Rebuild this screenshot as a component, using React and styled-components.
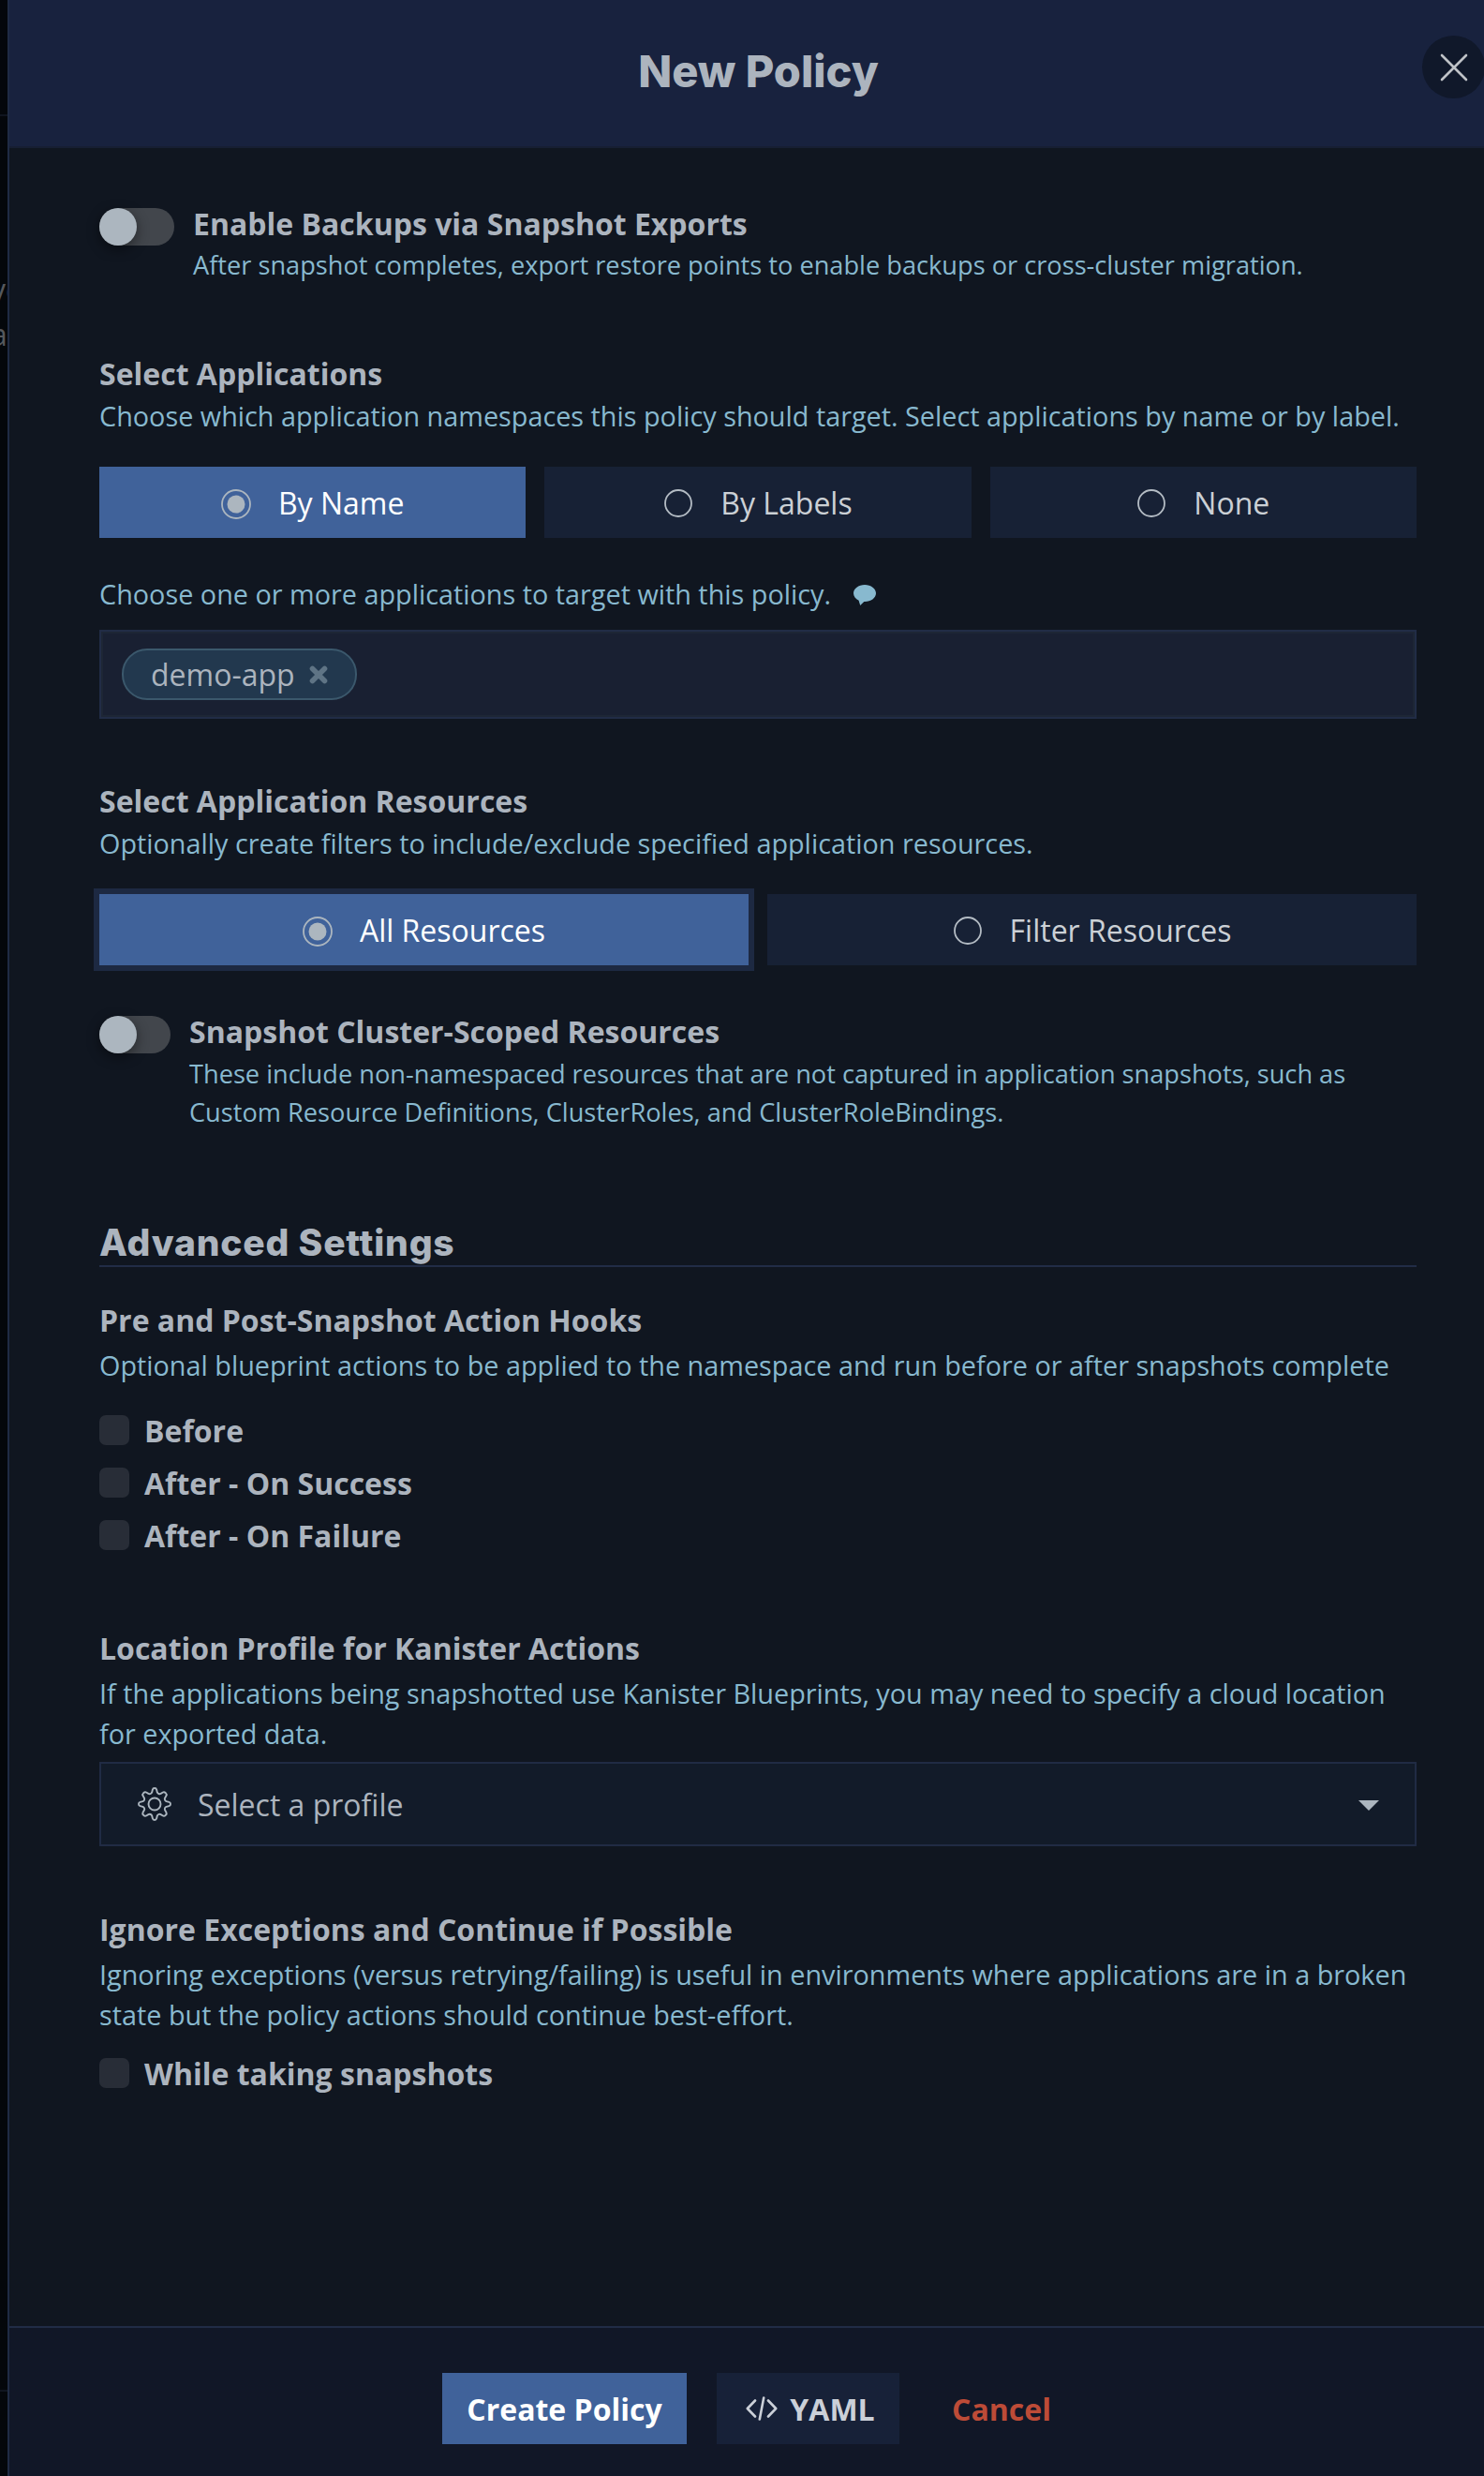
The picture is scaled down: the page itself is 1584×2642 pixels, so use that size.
import React, { useState } from 'react'
import styled, { createGlobalStyle, css } from 'styled-components'

const GlobalStyle = createGlobalStyle`
  * {
    box-sizing: border-box;
  }
  body {
    margin: 0;
    background: #04070b;
    font-family: 'Open Sans', 'Noto Sans', sans-serif;
    color: #acb4be;
  }
  h1, h2, h3, p {
    margin: 0;
  }
  button {
    border: 0;
    padding: 0;
    background: none;
    font: inherit;
    color: inherit;
  }
`

const Page = styled.div`
  display: flex;
  width: 1584px;
  height: 2642px;
  overflow: hidden;
`

const Behind = styled.div`
  display: flex;
  flex-direction: column;
  width: 8px;
  flex: none;
  overflow: hidden;
  background: #04070b;
  color: #55585d;
  font-size: 32px;
  line-height: 48px;
  white-space: nowrap;
`

const BehindLine = styled.div`
  height: 2px;
  flex: none;
  margin-top: ${(p) => p.$top}px;
  background: #10151f;
`

const BehindText = styled.div`
  display: flex;
  flex-direction: column;
  margin-top: 161px;
  height: 97px;
`

const BehindWord = styled.span`
  margin-left: ${(p) => p.$shift}px;
`

const Panel = styled.div`
  display: flex;
  flex-direction: column;
  flex: 1;
  border-left: 2px solid #1f2b44;
  background: #101620;
`

const Header = styled.header`
  position: relative;
  display: flex;
  justify-content: center;
  height: 158px;
  padding-top: 48px;
  background: #18223e;
  border-bottom: 2px solid #171f33;
`

const Title = styled.h1`
  font-family: Inter, sans-serif;
  font-size: 47px;
  font-weight: 800;
  line-height: 56px;
  margin-left: 25px;
`

const Close = styled.button`
  position: absolute;
  top: 38px;
  right: -1px;
  width: 67px;
  height: 67px;
  border-radius: 50%;
  background: #10182a;
  display: flex;
  align-items: center;
  justify-content: center;
  color: #bfc2c7;
`

const Body = styled.main`
  display: flex;
  flex-direction: column;
  flex: 1;
  padding: 59px 72px 0 96px;
`

const Section = styled.section`
  display: flex;
  flex-direction: column;
  margin-top: ${(p) => p.$top || 0}px;
`

const ToggleRow = styled.div`
  display: flex;
  gap: 20px;
  margin-top: ${(p) => p.$top || 0}px;
`

const Track = styled.button`
  flex: none;
  width: ${(p) => p.$width}px;
  height: 40px;
  margin-top: 5px;
  border-radius: 20px;
  background: #42464c;
  display: flex;
`

const Knob = styled.span`
  width: 40px;
  height: 40px;
  border-radius: 50%;
  background: #acb6bf;
  box-shadow: 0 4px 14px rgba(0, 0, 0, 0.45);
`

const Heading = styled.h3`
  font-size: 32px;
  font-weight: 700;
  line-height: 44px;
`

const Help = styled.p`
  display: flex;
  align-items: center;
  margin-top: ${(p) => p.$top ?? 1}px;
  font-size: 28.8px;
  line-height: 43px;
  color: #88b9cf;
  white-space: pre;

  ${(p) =>
    p.$small &&
    css`
      font-size: 27.2px;
      line-height: 41px;
    `}
`

const Choices = styled.div`
  display: flex;
  gap: 20px;
  margin-top: ${(p) => p.$top}px;
`

const Choice = styled.button`
  flex: 1;
  height: 76px;
  padding-top: 2px;
  display: flex;
  align-items: center;
  justify-content: center;
  gap: 29px;
  font-size: 32px;
  line-height: 44px;
  background: ${(p) => (p.$active ? '#40629a' : '#172135')};
  color: ${(p) => (p.$active ? '#ffffff' : '#cbd0d5')};
  box-shadow: ${(p) => (p.$focus ? '0 0 0 6px #1d2942' : 'none')};

  svg {
    margin-top: 2px;
  }
`

const TagBox = styled.div`
  display: flex;
  align-items: center;
  height: 95px;
  margin-top: 17px;
  padding: 0 22px;
  border: 2px solid #212c46;
  box-shadow: inset 0 0 0 2px #1d2635;
  background: #192032;
`

const Tag = styled.div`
  display: flex;
  align-items: center;
  gap: 15px;
  height: 55px;
  padding: 0 29px;
  border: 2px solid #3b586c;
  border-radius: 27px;
  background: #22384e;
  font-size: 32px;
  line-height: 44px;
`

const Divider = styled.h2`
  margin-top: 96px;
  padding-bottom: 1px;
  border-bottom: 2px solid #222c46;
  font-family: Inter, sans-serif;
  font-size: 39px;
  font-weight: 800;
  line-height: 46px;
  letter-spacing: 0.8px;
`

const CheckList = styled.div`
  display: flex;
  flex-direction: column;
  gap: 22px;
  margin-top: ${(p) => p.$top}px;
`

const CheckLabel = styled.label`
  display: flex;
  gap: 16px;
  font-size: 32px;
  font-weight: 700;
  line-height: 34px;
`

const Box = styled.span`
  width: 32px;
  height: 32px;
  border-radius: 7px;
  background: #282d37;
`

const Select = styled.div`
  display: flex;
  align-items: center;
  height: 90px;
  margin-top: 9px;
  padding: 0 38px 0 39px;
  border: 2px solid #202b44;
  background: #121b29;
  font-size: 32px;
  line-height: 44px;
`

const SelectText = styled.span`
  flex: 1;
  margin-left: 28px;
  padding-top: 2px;
`

const Footer = styled.footer`
  display: flex;
  align-items: flex-start;
  height: 160px;
  padding: 48px 0 0 462px;
  border-top: 2px solid #212c46;
  background: #111727;
`

const Action = styled.button`
  display: flex;
  align-items: center;
  justify-content: center;
  gap: 13px;
  height: 76px;
  width: ${(p) => p.$width}px;
  padding-left: ${(p) => p.$indent || 0}px;
  margin-right: 32px;
  font-size: 32px;
  font-weight: 700;
  background: ${(p) => p.$bg || 'transparent'};
  color: ${(p) => p.$color};
`

const RadioIcon = ({ active }) => (
  <svg width="32" height="32" viewBox="0 0 32 32" fill="none">
    {active ? (
      <>
        <circle cx="16" cy="16" r="15" stroke="#acb6bf" strokeWidth="1.8" />
        <circle cx="16" cy="16" r="9.5" fill="#acb6bf" />
      </>
    ) : (
      <circle cx="16" cy="15" r="14" stroke="#b4bcc4" strokeWidth="1.8" />
    )}
  </svg>
)

const CloseIcon = () => (
  <svg width="30" height="30" viewBox="0 0 30 30">
    <path
      d="M2 2 28 28M28 2 2 28"
      stroke="currentColor"
      strokeWidth="2.6"
      strokeLinecap="round"
    />
  </svg>
)

const RemoveIcon = () => (
  <svg width="20" height="20" viewBox="0 0 20 20">
    <path
      d="M3.5 3.5 16.5 16.5M16.5 3.5 3.5 16.5"
      stroke="#5f7485"
      strokeWidth="5.6"
      strokeLinecap="round"
    />
  </svg>
)

const BubbleIcon = styled.svg`
  margin: 2px 0 0 24px;
`

// eight rounded teeth around the rim
const GearIcon = () => (
  <svg width="36" height="36" viewBox="0 0 36 36" fill="none">
    <path
      d="M15.9 2.6Q16.2 1 18 1T20.1 2.6L20.8 5.4Q21.2 6.6 22.4 7T24.6 6.9L26.9 5.5Q28.3 4.7 29.8 6.2T30.5 9.1L29.1 11.4Q28.5 12.6 29 13.7T30.6 15.2L33.4 15.9Q35 16.2 35 18T33.4 20.1L30.6 20.8Q29.4 21.2 29 22.3T29.1 24.6L30.5 26.9Q31.3 28.3 29.8 29.8T26.9 30.5L24.6 29.1Q23.4 28.5 22.3 29T20.8 30.6L20.1 33.4Q19.8 35 18 35T15.9 33.4L15.2 30.6Q14.8 29.4 13.7 29T11.4 29.1L9.1 30.5Q7.7 31.3 6.2 29.8T5.5 26.9L6.9 24.6Q7.5 23.4 7 22.3T5.4 20.8L2.6 20.1Q1 19.8 1 18T2.6 15.9L5.4 15.2Q6.6 14.8 7 13.7T6.9 11.4L5.5 9.1Q4.7 7.7 6.2 6.2T9.1 5.5L11.4 6.9Q12.6 7.5 13.7 7T15.2 5.4Z"
      stroke="#acb6bf"
      strokeWidth="1.9"
      strokeLinejoin="round"
    />
    <circle cx="18" cy="18" r="6.5" stroke="#acb6bf" strokeWidth="1.9" />
  </svg>
)

const CaretIcon = () => (
  <svg width="22" height="14" viewBox="0 0 22 14">
    <path d="M0 3H22L11 14Z" fill="#acb6bf" />
  </svg>
)

const CodeIcon = () => (
  <svg width="34" height="26" viewBox="0 0 34 26" fill="none">
    <path
      d="M10 4.5 1.8 13 10 21.5M24 4.5 32.2 13 24 21.5M19.2 1.5 14.8 24.5"
      stroke="currentColor"
      strokeWidth="2.6"
      strokeLinecap="round"
      strokeLinejoin="round"
    />
  </svg>
)

const RadioGroup = ({ options, value, onChange, top, focused }) => (
  <Choices $top={top}>
    {options.map((option) => (
      <Choice
        key={option}
        $active={option === value}
        $focus={option === focused}
        onClick={() => onChange(option)}
      >
        <RadioIcon active={option === value} />
        {option}
      </Choice>
    ))}
  </Choices>
)

const Checkbox = ({ label }) => (
  <CheckLabel>
    <Box />
    {label}
  </CheckLabel>
)

const App = () => {
  const [target, setTarget] = useState('By Name')
  const [resources, setResources] = useState('All Resources')

  return (
    <>
      <GlobalStyle />
      <Page>
        <Behind>
          <BehindLine $top={122} />
          <BehindText>
            <BehindWord $shift={-10}>ve</BehindWord>
            <BehindWord $shift={-10}>a</BehindWord>
          </BehindText>
          <BehindLine $top={2168} />
        </Behind>
        <Panel>
          <Header>
            <Title>New Policy</Title>
            <Close aria-label="Close">
              <CloseIcon />
            </Close>
          </Header>

          <Body>
            <ToggleRow>
              <Track $width={80}>
                <Knob />
              </Track>
              <div>
                <Heading>Enable Backups via Snapshot Exports</Heading>
                <Help $small>
                  After snapshot completes, export restore points to enable backups or cross-cluster migration.
                </Help>
              </div>
            </ToggleRow>

            <Section $top={74}>
              <Heading>Select Applications</Heading>
              <Help>
                Choose which application namespaces this policy should target. Select applications by name or by label.
              </Help>
              <RadioGroup
                top={33}
                options={['By Name', 'By Labels', 'None']}
                value={target}
                onChange={setTarget}
              />
              <Help $top={38}>
                Choose one or more applications to target with this policy.
                <BubbleIcon width="24" height="22" viewBox="0 0 24 22">
                  <path
                    d="M12 0C5.4 0 0 4 0 9C0 12.3 2.2 15 5.6 16.7L7.2 22L11.3 18H12C18.6 18 24 14 24 9S18.6 0 12 0Z"
                    fill="#88b9cf"
                  />
                </BubbleIcon>
              </Help>
              <TagBox>
                <Tag>
                  demo-app
                  <RemoveIcon />
                </Tag>
              </TagBox>
            </Section>

            <Section $top={66}>
              <Heading>Select Application Resources</Heading>
              <Help>Optionally create filters to include/exclude specified application resources.</Help>
              <RadioGroup
                top={33}
                options={['All Resources', 'Filter Resources']}
                value={resources}
                onChange={setResources}
                focused="All Resources"
              />
              <ToggleRow $top={49}>
                <Track $width={76}>
                  <Knob />
                </Track>
                <div>
                  <Heading>Snapshot Cluster-Scoped Resources</Heading>
                  <Help $small $top={2}>
                    {'These include non-namespaced resources that are not captured in application snapshots, such as\nCustom Resource Definitions, ClusterRoles, and ClusterRoleBindings.'}
                  </Help>
                </div>
              </ToggleRow>
            </Section>

            <Divider>Advanced Settings</Divider>

            <Section $top={35}>
              <Heading>Pre and Post-Snapshot Action Hooks</Heading>
              <Help $top={4}>
                Optional blueprint actions to be applied to the namespace and run before or after snapshots complete
              </Help>
              <CheckList $top={32}>
                <Checkbox label="Before" />
                <Checkbox label="After - On Success" />
                <Checkbox label="After - On Failure" />
              </CheckList>
            </Section>

            <Section $top={81}>
              <Heading>Location Profile for Kanister Actions</Heading>
              <Help $top={4}>
                {'If the applications being snapshotted use Kanister Blueprints, you may need to specify a cloud location\nfor exported data.'}
              </Help>
              <Select>
                <GearIcon />
                <SelectText>Select a profile</SelectText>
                <CaretIcon />
              </Select>
            </Section>

            <Section $top={67}>
              <Heading>Ignore Exceptions and Continue if Possible</Heading>
              <Help $top={4}>
                {'Ignoring exceptions (versus retrying/failing) is useful in environments where applications are in a broken\nstate but the policy actions should continue best-effort.'}
              </Help>
              <CheckList $top={25}>
                <Checkbox label="While taking snapshots" />
              </CheckList>
            </Section>
          </Body>

          <Footer>
            <Action $width={261} $bg="#40629a" $color="#ffffff">
              Create Policy
            </Action>
            <Action $width={195} $indent={5} $bg="#172138" $color="#cbd0d8">
              <CodeIcon />
              YAML
            </Action>
            <Action $width={154} $color="#bd4b37">
              Cancel
            </Action>
          </Footer>
        </Panel>
      </Page>
    </>
  )
}

export default App
